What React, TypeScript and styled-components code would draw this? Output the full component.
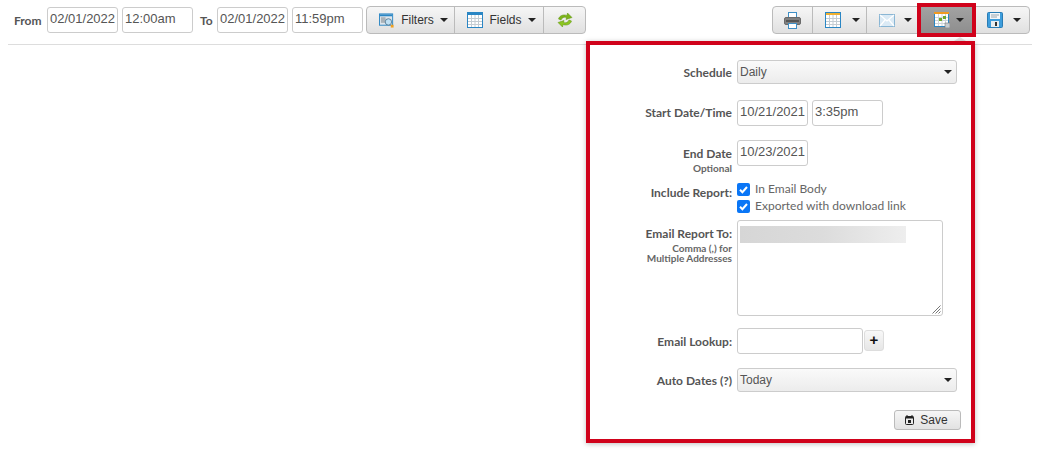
import React from 'react';
import styled, { createGlobalStyle } from 'styled-components';

const Global = createGlobalStyle`
  html, body { margin: 0; padding: 0; background: #fff; }
  body { font-family: "Liberation Sans", Arial, sans-serif; }
  * { box-sizing: border-box; }
`;

const Page = styled.div`
  position: relative;
  width: 1050px;
  height: 468px;
  overflow: hidden;
`;

const Toolbar = styled.div`
  margin: 0 18px 0 8px;
  height: 45px;
  padding: 6px 2px 0 6px;
  border-bottom: 1px solid #ddd;
  display: flex;
  align-items: flex-start;
`;

const RangeLabel = styled.span<{ $w: number; $ml?: number }>`
  width: ${p => p.$w}px;
  margin-left: ${p => p.$ml ?? 0}px;
  height: 28px;
  font: bold 12px/30px Lato, sans-serif;
  color: #555;
`;

const TextBox = styled.div<{ $w?: number }>`
  width: ${p => p.$w ?? 71}px;
  height: 26px;
  margin-top: 1px;
  margin-right: 4px;
  padding: 0 2px;
  border: 1px solid #ccc;
  border-radius: 3px;
  background: #fff;
  font-size: 13px;
  line-height: 22px;
  color: #555;
  flex: none;
`;

const Group = styled.div<{ $push?: boolean }>`
  display: flex;
  height: 28px;
  margin-left: ${p => (p.$push ? 'auto' : '-1px')};
  border: 1px solid #bbb;
  border-radius: 4px;
  background: linear-gradient(#f6f6f6, #e0e0e0);
`;

const Segment = styled.div<{ $w: number; $last?: boolean; $pl?: number }>`
  width: ${p => p.$w}px;
  padding-left: ${p => p.$pl ?? 0}px;
  display: flex;
  align-items: center;
  justify-content: center;
  gap: 6px;
  border-right: ${p => (p.$last ? '0' : '1px solid #bbb')};
  font-size: 12px;
  color: #333;
`;

const ActiveSegment = styled(Segment)`
  background: linear-gradient(#a2a2a2, #8e8e8e);
`;

const Caret = styled.i<{ $ml?: number }>`
  display: inline-block;
  margin-left: ${p => p.$ml ?? 0}px;
  border-top: 4px solid #222;
  border-left: 4px solid transparent;
  border-right: 4px solid transparent;
`;

const Highlight = styled.div`
  position: absolute;
  left: 917px;
  top: 3px;
  width: 59px;
  height: 34px;
  border: 4px solid #d0021b;
  background: transparent;
`;

const Notch = styled.div`
  position: absolute;
  left: 954px;
  top: 37px;
  border-bottom: 4px solid #e4e4e4;
  border-left: 6px solid transparent;
  border-right: 6px solid transparent;
`;

const Panel = styled.div`
  position: absolute;
  left: 586px;
  top: 41px;
  width: 389px;
  height: 402px;
  padding: 15px 14px 0 0;
  border: 4px solid #d0021b;
  background: #fff;
  box-shadow: 0 1px 5px rgba(0, 0, 0, 0.25);
`;

const Row = styled.div<{ $gap: number }>`
  display: flex;
  column-gap: 5px;
  margin-top: ${p => p.$gap}px;
`;

const LabelCol = styled.div<{ $pt?: number }>`
  width: 142px;
  flex: none;
  padding-top: ${p => p.$pt ?? 0}px;
  text-align: right;
  font-family: Lato, sans-serif;
  color: #555;
`;

const Label = styled.div`
  font-size: 12px;
  font-weight: bold;
  line-height: 14px;

  & + div {
    margin-top: 2px;
  }
`;

const Hint = styled.div`
  font-size: 10px;
  font-weight: bold;
  line-height: 10px;
  color: #666;
`;

const Fields = styled.div`
  display: flex;
  flex-wrap: wrap;
  align-items: flex-start;
`;

const FieldBox = styled(TextBox)`
  margin-top: 0;
`;

const Select = styled.div`
  width: 220px;
  height: 24px;
  padding: 0 4px 0 2px;
  display: flex;
  align-items: center;
  justify-content: space-between;
  border: 1px solid #ccc;
  border-radius: 3px;
  background: linear-gradient(#fafafa, #ececec);
  font-size: 12px;
  color: #555;
`;

const Checks = styled.div`
  display: flex;
  flex-direction: column;
  row-gap: 3px;
`;

const CheckRow = styled.label`
  display: flex;
  align-items: center;
  column-gap: 5px;
  height: 14px;
  font: 12px/14px Lato, sans-serif;
  color: #666;
`;

const CheckBox = styled.span`
  width: 13px;
  height: 13px;
  border-radius: 2px;
  background: #0a76f6;
  display: flex;
  align-items: center;
  justify-content: center;
`;

const TextArea = styled.div`
  position: relative;
  width: 206px;
  height: 96px;
  padding: 5px 2px;
  border: 1px solid #ccc;
  border-radius: 3px;
  background: #fff;
`;

const Redacted = styled.div`
  width: 166px;
  height: 17px;
  background: linear-gradient(90deg, #d6d6d6, #dcdcdc 50%, #eeeeee);
`;

const Grip = styled.svg`
  position: absolute;
  right: 1px;
  bottom: 1px;
`;

const LookupBox = styled(FieldBox)`
  margin-right: 1px;
`;

const PlusButton = styled.div`
  width: 20px;
  height: 21px;
  margin-top: 2px;
  border: 1px solid #ddd;
  border-radius: 3px;
  background: linear-gradient(#f8f8f8, #e6e6e6);
  font: bold 15px/17px "Liberation Sans", sans-serif;
  color: #111;
  text-align: center;
`;

const Footer = styled.div`
  display: flex;
  justify-content: flex-end;
  margin: 18px -4px 0 0;
`;

const SaveButton = styled.div`
  width: 67px;
  height: 20px;
  padding: 0 2px 1px 0;
  display: flex;
  align-items: center;
  justify-content: center;
  column-gap: 6px;
  border: 1px solid #bbb;
  border-radius: 3px;
  background: linear-gradient(#f6f6f6, #e2e2e2);
  font-size: 12px;
  color: #333;
`;

const FiltersIcon = () => (
  <svg width="16" height="17" viewBox="0 0 17 17">
    <rect x="0.5" y="1.5" width="14" height="12" fill="#dfe6ec" stroke="#2a86c4" />
    <rect x="1" y="2" width="13" height="2" fill="#2a86c4" />
    <rect x="2" y="5" width="5" height="6" fill="#aab2b8" />
    <circle cx="10" cy="10" r="3.4" fill="#bfe0f4" stroke="#5a7f98" />
    <rect x="12.5" y="13" width="3" height="3" fill="#f0a020" />
  </svg>
);

const GridIcon = ({ head = '#2a86c4' }: { head?: string }) => (
  <svg width="16" height="16" viewBox="0 0 16 16">
    <rect x="0.5" y="0.5" width="15" height="15" fill="#fff" stroke="#2a86c4" />
    <rect x="1" y="1" width="14" height="2" fill={head} />
    <path d="M1 6.5h14M1 9.5h14M1 12.5h14M4.5 3v12M8 3v12M11.5 3v12" stroke="#c4ccd2" />
  </svg>
);

const RefreshIcon = () => (
  <svg width="16" height="16" viewBox="0 0 16 16">
    <path d="M1.5 7C2.5 3.5 6.5 2 10 3.5L10.5 1 15 5.5 9 7.5 9.5 5.5C7 4.7 5 5.5 4 8Z" fill="#7cb518" stroke="#5d8f10" strokeWidth="0.5" />
    <path d="M14.5 9C13.5 12.5 9.5 14 6 12.5L5.5 15 1 10.5 7 8.5 6.5 10.5C9 11.3 11 10.5 12 8Z" fill="#8cc620" stroke="#5d8f10" strokeWidth="0.5" />
  </svg>
);

const PrintIcon = () => (
  <svg width="17" height="17" viewBox="0 0 17 17">
    <rect x="4.5" y="0.5" width="8" height="5" fill="#fff" stroke="#3f8fc6" />
    <rect x="0.5" y="5.5" width="16" height="7" rx="1.5" fill="#808080" stroke="#6a6a6a" />
    <rect x="2" y="8" width="13" height="2" fill="#555" />
    <rect x="4.5" y="11.5" width="8" height="5" fill="#fff" stroke="#3f8fc6" />
  </svg>
);

const MailIcon = () => (
  <svg width="16" height="13" viewBox="0 0 16 13">
    <rect x="0.5" y="0.5" width="15" height="12" fill="#dbeaf5" stroke="#8ab6d4" />
    <path d="M1 1l7 6 7-6M1 12l5-6M15 12l-5-6" fill="none" stroke="#fff" strokeWidth="1.2" />
  </svg>
);

const ScheduleIcon = () => (
  <svg width="16" height="16" viewBox="0 0 16 16">
    <rect x="0.5" y="0.5" width="14" height="14" fill="#fff" stroke="#2a86c4" />
    <rect x="0" y="0" width="15" height="2" fill="#f09a20" />
    <path d="M1 5.5h13M1 8.5h13M1 11.5h13M4.5 2v12M8 2v12M11.5 2v12" stroke="#d0d5d9" />
    <rect x="5" y="6" width="3" height="3" fill="#6fa82a" />
    <rect x="9" y="4" width="3" height="3" fill="#6fa82a" />
    <rect x="11" y="11" width="5" height="5" fill="#c6ccd0" stroke="#777" strokeWidth="0.6" />
  </svg>
);

const FloppyIcon = () => (
  <svg width="16" height="16" viewBox="0 0 16 16">
    <rect x="0.5" y="0.5" width="15" height="15" rx="1" fill="#3d9ddc" stroke="#2a7cb4" />
    <rect x="3" y="1" width="10" height="6" fill="#f4f7f9" />
    <path d="M4 3h8M4 5h6" stroke="#9aa6ae" />
    <rect x="4" y="9" width="8" height="6" fill="#e8edf0" />
    <rect x="8" y="10" width="2" height="4" fill="#333" />
  </svg>
);

const SaveGlyph = () => (
  <svg width="9" height="10" viewBox="0 0 9 10">
    <path d="M2 0v2M7 0v2" stroke="#222" />
    <rect x="0.5" y="1.5" width="8" height="8" rx="1" fill="none" stroke="#222" />
    <rect x="0.5" y="1.5" width="8" height="2" fill="#222" />
    <rect x="3" y="5" width="3" height="3" fill="#222" />
  </svg>
);

const Tick = () => (
  <svg width="11" height="11" viewBox="0 0 11 11">
    <path d="M2 5.8l2.4 2.4L9 3" fill="none" stroke="#fff" strokeWidth="2" />
  </svg>
);

export default function App() {
  return (
    <Page>
      <Global />
      <Toolbar>
        <RangeLabel $w={33}>From</RangeLabel>
        <TextBox>02/01/2022</TextBox>
        <TextBox>12:00am</TextBox>
        <RangeLabel $w={17} $ml={3}>To</RangeLabel>
        <TextBox>02/01/2022</TextBox>
        <TextBox>11:59pm</TextBox>
        <Group>
          <Segment $w={88} $pl={6}>
            <FiltersIcon />
            <span>Filters</span>
            <Caret />
          </Segment>
          <Segment $w={89} $pl={5}>
            <GridIcon />
            <span>Fields</span>
            <Caret />
          </Segment>
          <Segment $w={41} $last>
            <RefreshIcon />
          </Segment>
        </Group>
        <Group $push>
          <Segment $w={40}>
            <PrintIcon />
          </Segment>
          <Segment $w={54} $pl={5}>
            <GridIcon head="#f0b030" />
            <Caret $ml={5} />
          </Segment>
          <Segment $w={51} $pl={6}>
            <MailIcon />
            <Caret $ml={3} />
          </Segment>
          <ActiveSegment $w={58} $pl={4}>
            <ScheduleIcon />
            <Caret />
          </ActiveSegment>
          <Segment $w={53} $last $pl={2}>
            <FloppyIcon />
            <Caret $ml={4} />
          </Segment>
        </Group>
      </Toolbar>

      <Notch />
      <Highlight />

      <Panel>
        <Row $gap={0}>
          <LabelCol $pt={6}>
            <Label>Schedule</Label>
          </LabelCol>
          <Select>
            Daily
            <Caret />
          </Select>
        </Row>
        <Row $gap={16}>
          <LabelCol $pt={6}>
            <Label>Start Date/Time</Label>
          </LabelCol>
          <Fields>
            <FieldBox>10/21/2021</FieldBox>
            <FieldBox>3:35pm</FieldBox>
          </Fields>
        </Row>
        <Row $gap={14}>
          <LabelCol $pt={7}>
            <Label>End Date</Label>
            <Hint>Optional</Hint>
          </LabelCol>
          <Fields>
            <FieldBox>10/23/2021</FieldBox>
          </Fields>
        </Row>
        <Row $gap={9}>
          <LabelCol $pt={4}>
            <Label>Include Report:</Label>
          </LabelCol>
          <Checks>
            <CheckRow>
              <CheckBox>
                <Tick />
              </CheckBox>
              In Email Body
            </CheckRow>
            <CheckRow>
              <CheckBox>
                <Tick />
              </CheckBox>
              Exported with download link
            </CheckRow>
          </Checks>
        </Row>
        <Row $gap={7}>
          <LabelCol $pt={7}>
            <Label>Email Report To:</Label>
            <Hint>Comma (,) for</Hint>
            <Hint>Multiple Addresses</Hint>
          </LabelCol>
          <TextArea>
            <Redacted />
            <Grip width="9" height="9" viewBox="0 0 9 9">
              <path d="M8.5 0.5l-8 8M8.5 3.5l-5 5M8.5 6.5l-2 2" stroke="#777" />
            </Grip>
          </TextArea>
        </Row>
        <Row $gap={12}>
          <LabelCol $pt={7}>
            <Label>Email Lookup:</Label>
          </LabelCol>
          <Fields>
            <LookupBox $w={126} />
            <PlusButton>+</PlusButton>
          </Fields>
        </Row>
        <Row $gap={14}>
          <LabelCol $pt={6}>
            <Label>Auto Dates (?)</Label>
          </LabelCol>
          <Select>
            Today
            <Caret />
          </Select>
        </Row>
        <Footer>
          <SaveButton>
            <SaveGlyph />
            <span>Save</span>
          </SaveButton>
        </Footer>
      </Panel>
    </Page>
  );
}
